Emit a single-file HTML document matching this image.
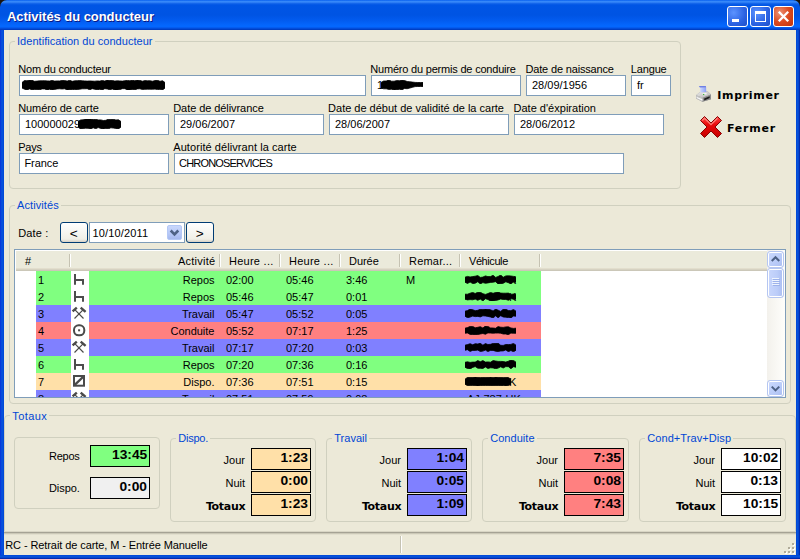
<!DOCTYPE html>
<html lang="fr"><head><meta charset="utf-8"><title>Activités du conducteur</title>
<style>
html,body{margin:0;padding:0;}
body{width:800px;height:559px;overflow:hidden;background:#ece9d8;position:relative;font-family:"Liberation Sans",sans-serif;font-size:11px;color:#000;}
.a{position:absolute;white-space:nowrap;}
.t{position:absolute;white-space:nowrap;line-height:13px;height:13px;font-size:11px;}
.in{position:absolute;box-sizing:border-box;height:21px;border:1px solid #7f9db9;background:#fff;line-height:19.600px;padding-left:5px;font-size:11px;white-space:nowrap;}
.gb{position:absolute;box-sizing:border-box;border:1px solid #d0d0bf;border-radius:4px;}
.gl{position:absolute;white-space:nowrap;color:#0046d5;background:#ece9d8;line-height:13px;height:13px;font-size:11px;}
.vb{position:absolute;box-sizing:border-box;width:60px;height:22px;border:1px solid #000;text-align:right;padding-right:1.500px;font-weight:bold;font-size:13px;line-height:17px;}
.vb span{display:inline-block;transform:scaleX(1.06);transform-origin:100% 50%;}
.bl{position:absolute;white-space:nowrap;font-family:"DejaVu Sans","Liberation Sans",sans-serif;font-weight:bold;font-size:11px;line-height:13px;}
.scr{position:absolute;background:#000;border-radius:4px;}
.btn{position:absolute;box-sizing:border-box;border:1px solid #003c74;border-radius:3px;background:linear-gradient(#fff,#f0efe6 85%,#d6d0c5);text-align:center;}
.row{position:absolute;left:36px;width:505px;height:17px;}
.c{position:absolute;top:1px;line-height:17px;height:17px;white-space:nowrap;font-size:11px;}
.hd{position:absolute;top:252px;height:19px;line-height:19px;white-space:nowrap;font-size:11px;}
.sep{position:absolute;top:254px;width:1px;height:13px;background:#c5c2b2;border-right:1px solid #fff;}
</style></head><body>

<div class="a" style="left:0;top:0;width:800px;height:10px;background:#1a1410"></div>
<div class="a" style="left:0;top:0;width:800px;height:30px;border-radius:7px 7px 0 0;background:linear-gradient(#0058ee 0%,#2a7ef6 3%,#3c8dfb 6%,#2878f2 9%,#0a5de8 13%,#0055e5 18%,#0054e3 50%,#025bef 68%,#0465fb 82%,#0468ff 88%,#0458ea 93%,#0042cc 97%,#0038b8 100%);"></div>
<div class="a" style="left:7px;top:9px;font-weight:bold;font-size:13px;line-height:16px;color:#fff;text-shadow:1px 1px 0 #0a1883;letter-spacing:-0.050px">Activités du conducteur</div>

<div class="a" style="left:0;top:30px;width:4px;height:529px;background:linear-gradient(90deg,#0831d9,#0855dd 50%,#0046d6);"></div>
<div class="a" style="left:796px;top:30px;width:4px;height:529px;background:linear-gradient(90deg,#0046d6,#0855dd 50%,#001ea0);"></div>
<div class="a" style="left:0;top:555px;width:800px;height:4px;background:linear-gradient(#0046d6,#0855dd 50%,#001ea0);"></div>
<div class="a" style="left:727px;top:6px;width:21px;height:21px;box-sizing:border-box;border:1px solid #fff;border-radius:3px;background:radial-gradient(circle at 30% 30%,#5c93ff,#2b62e2 60%,#1f4fc8);"><div class="a" style="left:4px;top:12px;width:7px;height:3px;background:#fff"></div></div>
<div class="a" style="left:750px;top:6px;width:21px;height:21px;box-sizing:border-box;border:1px solid #fff;border-radius:3px;background:radial-gradient(circle at 30% 30%,#5c93ff,#2b62e2 60%,#1f4fc8);"><div class="a" style="left:4px;top:4px;width:11px;height:11px;box-sizing:border-box;border:1px solid #fff;border-top-width:3px"></div></div>
<div class="a" style="left:773px;top:6px;width:21px;height:21px;box-sizing:border-box;border:1px solid #fff;border-radius:3px;background:radial-gradient(circle at 30% 30%,#ec9276,#dc4a20 50%,#c0330c);"><svg class="a" style="left:0;top:0" width="19" height="19" viewBox="0 0 19 19"><path d="M4.800 4.800l9.400 9.400M14.200 4.800l-9.400 9.400" stroke="#fff" stroke-width="2.300" fill="none"/></svg></div>
<div class="gb" style="left:9px;top:41px;width:672px;height:148px"></div>
<div class="gl" style="left:15.0px;top:35px;padding:0 2px;letter-spacing:0.036px">Identification du conducteur</div>
<div class="t" style="left:18.25px;top:63px;letter-spacing:-0.203px;">Nom du conducteur</div>
<div class="in" style="left:19px;top:75px;width:347px"></div>
<div class="t" style="left:370.3px;top:63px;letter-spacing:-0.199px;">Numéro du permis de conduire</div>
<div class="in" style="left:371px;top:75px;width:150px">1</div>
<div class="t" style="left:525.5px;top:63px;letter-spacing:-0.167px;">Date de naissance</div>
<div class="in" style="left:526px;top:75px;width:100px">28/09/1956</div>
<div class="t" style="left:630.7px;top:63px;letter-spacing:-0.131px;">Langue</div>
<div class="in" style="left:631px;top:75px;width:40px">fr</div>
<div class="t" style="left:18.25px;top:102px;letter-spacing:-0.102px;">Numéro de carte</div>
<div class="in" style="left:19px;top:114px;width:150px">100000029</div>
<div class="t" style="left:173.25px;top:102px;letter-spacing:-0.072px;">Date de délivrance</div>
<div class="in" style="left:174px;top:114px;width:150px">29/06/2007</div>
<div class="t" style="left:328.1px;top:102px;letter-spacing:-0.007px;">Date de début de validité de la carte</div>
<div class="in" style="left:329px;top:114px;width:180px">28/06/2007</div>
<div class="t" style="left:513.5px;top:102px;letter-spacing:0.015px;">Date d'éxpiration</div>
<div class="in" style="left:514px;top:114px;width:150px">28/06/2012</div>
<div class="t" style="left:18.25px;top:141px;letter-spacing:-0.235px;">Pays</div>
<div class="in" style="left:19px;top:153px;width:150px;padding-left:4.5px;letter-spacing:-0.097px">France</div>
<div class="t" style="left:173.25px;top:141px;letter-spacing:0.07px;">Autorité délivrant la carte</div>
<div class="in" style="left:174px;top:153px;width:450px;padding-left:4.0px;letter-spacing:-0.813px">CHRONOSERVICES</div>
<svg class="a" style="left:22px;top:80px" width="143" height="10" viewBox="0 0 143 10"><path d="M0.0 2.5 L2.5 0.5 L5.0 0.8 L7.5 0.0 L10.0 0.3 L12.5 1.3 L15.1 1.1 L17.6 0.8 L20.1 0.8 L22.6 0.7 L25.1 0.9 L27.6 1.0 L30.1 0.4 L32.6 1.1 L35.1 0.9 L37.6 0.9 L40.1 0.5 L42.6 0.6 L45.2 1.1 L47.7 0.2 L50.2 1.3 L52.7 0.8 L55.2 0.7 L57.7 0.5 L60.2 0.8 L62.7 0.9 L65.2 1.1 L67.7 0.9 L70.2 1.1 L72.8 1.2 L75.3 0.9 L77.8 1.1 L80.3 0.4 L82.8 1.1 L85.3 0.1 L87.8 0.5 L90.3 0.4 L92.8 1.1 L95.3 0.8 L97.8 0.9 L100.4 1.1 L102.9 0.7 L105.4 0.4 L107.9 0.8 L110.4 0.3 L112.9 0.8 L115.4 0.1 L117.9 0.4 L120.4 1.2 L122.9 0.6 L125.4 0.8 L127.9 0.7 L130.5 1.2 L133.0 0.6 L135.5 0.3 L138.0 1.3 L140.5 0.7 L143.0 2.5 L143.0 8.0 L140.5 10.0 L138.0 9.3 L135.5 9.6 L133.0 9.1 L130.5 9.3 L127.9 9.2 L125.4 9.2 L122.9 9.3 L120.4 9.5 L117.9 8.8 L115.4 8.9 L112.9 9.8 L110.4 9.5 L107.9 10.0 L105.4 9.9 L102.9 8.7 L100.4 8.7 L97.8 9.6 L95.3 9.9 L92.8 9.9 L90.3 9.0 L87.8 9.8 L85.3 9.0 L82.8 8.7 L80.3 9.9 L77.8 9.3 L75.3 9.7 L72.8 9.3 L70.2 8.7 L67.7 9.8 L65.2 8.7 L62.7 8.8 L60.2 8.8 L57.7 9.2 L55.2 9.5 L52.7 9.6 L50.2 9.4 L47.7 9.7 L45.2 9.9 L42.6 8.8 L40.1 9.0 L37.6 8.8 L35.1 8.9 L32.6 9.4 L30.1 10.0 L27.6 9.2 L25.1 9.9 L22.6 9.0 L20.1 8.9 L17.6 9.8 L15.1 9.4 L12.5 9.4 L10.0 9.7 L7.5 8.9 L5.0 9.9 L2.5 9.2 L0.0 8.0Z" fill="#000" stroke="#000" stroke-width="0.8" stroke-linejoin="round"/></svg>
<svg class="a" style="left:381px;top:80px" width="42" height="10" viewBox="0 0 42 10"><path d="M0.0 2.5 L2.6 1.0 L5.2 1.0 L7.9 0.0 L10.5 1.2 L13.1 1.2 L15.8 0.6 L18.4 0.7 L21.0 0.0 L23.6 0.6 L26.2 1.5 L28.9 1.8 L31.5 2.1 L34.1 2.4 L36.8 2.5 L39.4 2.5 L42.0 2.5 L42.0 6.5 L39.4 6.5 L36.8 6.5 L34.1 6.6 L31.5 7.3 L28.9 8.0 L26.2 8.7 L23.6 8.5 L21.0 9.7 L18.4 9.3 L15.8 9.7 L13.1 9.9 L10.5 9.2 L7.9 9.4 L5.2 8.8 L2.6 8.8 L0.0 8.0Z" fill="#000" stroke="#000" stroke-width="0.8" stroke-linejoin="round"/></svg>
<svg class="a" style="left:78px;top:119px" width="43" height="10" viewBox="0 0 43 10"><path d="M0.0 2.5 L2.5 1.0 L5.1 0.8 L7.6 0.1 L10.1 0.1 L12.6 0.1 L15.2 0.6 L17.7 0.2 L20.2 0.9 L22.8 0.9 L25.3 1.5 L27.8 1.3 L30.4 0.2 L32.9 0.5 L35.4 0.3 L37.9 1.0 L40.5 0.8 L43.0 2.5 L43.0 8.0 L40.5 9.9 L37.9 9.4 L35.4 9.1 L32.9 8.8 L30.4 9.8 L27.8 9.6 L25.3 9.9 L22.8 9.4 L20.2 8.6 L17.7 9.7 L15.2 8.8 L12.6 9.9 L10.1 9.3 L7.6 9.2 L5.1 9.5 L2.5 9.9 L0.0 8.0Z" fill="#000" stroke="#000" stroke-width="0.8" stroke-linejoin="round"/></svg>
<svg class="a" style="left:690px;top:82px" width="26" height="24" viewBox="0 0 26 24">
<defs><linearGradient id="pp" x1="0" y1="0" x2="1" y2="0"><stop offset="0" stop-color="#cfdaff"/><stop offset="1" stop-color="#8a9ef6"/></linearGradient>
<linearGradient id="pt" x1="0" y1="0" x2="1" y2="1"><stop offset="0" stop-color="#ececec"/><stop offset="1" stop-color="#b4b4b4"/></linearGradient></defs>
<path d="M6 13.300L10 10 17.600 9.200 21 12.400V17.200L12.400 19.700 6 16.500z" fill="#9a9a9a"/>
<path d="M6 13.300L10 10 17.600 9.200 21 12.400 12.900 15.700z" fill="url(#pt)"/>
<path d="M6 13.300L12.900 15.700 12.400 19.700 6 16.500z" fill="#c4c4c4"/>
<path d="M12.900 15.700L21 12.400V17.200L12.400 19.700z" fill="#8c8c8c"/>
<path d="M6.800 14.900L12.500 17.300V18.700L6.800 16.100z" fill="#fbfbfb"/>
<path d="M14.200 16.400L19.700 14.300V16L14.200 18.500z" fill="#1c1c1c"/>
<path d="M10.100 5.300H16.100L16.300 10.100 10.300 10.400z" fill="url(#pp)"/>
<path d="M8.800 3.900H15.900L16.100 5.500H9.900z" fill="#6f80e6"/>
<path d="M12.400 11H16.300L17 12.300 12.900 12.700z" fill="#f4f4f4"/>
<rect x="13" y="11.900" width="1.300" height="1.100" fill="#3cb83c"/>
</svg>
<div class="bl" style="left:717.25px;top:89px;letter-spacing:0.676px">Imprimer</div>
<svg class="a" style="left:699px;top:115px" width="24" height="24" viewBox="0 0 24 24">
<defs><linearGradient id="rx" x1="0" y1="0" x2="0" y2="1"><stop offset="0" stop-color="#ff4646"/><stop offset="0.400" stop-color="#e80a0a"/><stop offset="1" stop-color="#c60000"/></linearGradient></defs>
<path d="M1.500 5.500L5.500 1.500 12 8 18.500 1.500 22.500 5.500 16 12 22.500 18.500 18.500 22.500 12 16 5.500 22.500 1.500 18.500 8 12z" fill="url(#rx)" stroke="#860404" stroke-width="1" stroke-linejoin="round"/>
<path d="M3.200 5.500L5.500 3.200 12 9.700 18.500 3.200" fill="none" stroke="#ff8f85" stroke-width="1.300" opacity="0.850"/>
</svg>
<div class="bl" style="left:727.0px;top:122px;letter-spacing:0.77px">Fermer</div>
<div class="gb" style="left:9px;top:205px;width:782px;height:199px"></div>
<div class="gl" style="left:15.0px;top:199px;padding:0 2px;letter-spacing:0.099px">Activités</div>
<div class="t" style="left:18.25px;top:227px;letter-spacing:0.13px;">Date :</div>
<div class="btn" style="left:60px;top:222px;width:28px;height:21px;line-height:21px;font-size:13px"><span style="display:inline-block;transform:scaleX(1.05)">&lt;</span></div>
<div class="in" style="left:89px;top:222px;width:96px;padding-left:2.6px;letter-spacing:0.146px;line-height:20.500px">10/10/2011</div>
<div class="a" style="left:167px;top:225px;width:15px;height:15px;box-sizing:border-box;border:1px solid #b4c8f6;border-radius:2px;background:linear-gradient(#c9d7fc,#b6c8f7 60%,#a5b8ee);"><svg class="a" style="left:0;top:0" width="13" height="13" viewBox="0 0 13 13"><path d="M2.700 4.500l3.800 3.800 3.800-3.800" fill="none" stroke="#4d6185" stroke-width="2.600"/></svg></div>
<div class="btn" style="left:186px;top:222px;width:28px;height:21px;line-height:21px;font-size:13px"><span style="display:inline-block;transform:scaleX(1.05)">&gt;</span></div>
<div class="a" style="left:14px;top:249px;width:772px;height:149px;box-sizing:border-box;border:1px solid #7f9db9;background:#fff"></div>
<div class="a" style="left:16px;top:251px;width:751px;height:20px;background:linear-gradient(#ebeadb 0,#ebeadb 17px,#e2decd 17px,#e2decd 18px,#d6d2c2 18px,#d6d2c2 19px,#cbc7b8 19px,#cbc7b8 20px)"></div>
<div class="hd" style="left:25px">#</div>
<div class="hd" style="left:178.0px;letter-spacing:0.228px">Activité</div>
<div class="hd" style="left:229.0px;letter-spacing:0.258px">Heure ...</div>
<div class="hd" style="left:289.0px;letter-spacing:0.258px">Heure ...</div>
<div class="hd" style="left:349.0px;letter-spacing:-0.052px">Durée</div>
<div class="hd" style="left:409.0px;letter-spacing:0.205px">Remar...</div>
<div class="hd" style="left:469.0px;letter-spacing:-0.421px">Véhicule</div>
<div class="sep" style="left:69px"></div>
<div class="sep" style="left:219px"></div>
<div class="sep" style="left:279px"></div>
<div class="sep" style="left:339px"></div>
<div class="sep" style="left:399px"></div>
<div class="sep" style="left:459px"></div>
<div class="sep" style="left:539px"></div>
<div class="a" style="left:0;top:271px;width:767px;height:126px;overflow:hidden">
<div class="row" style="top:0px;background:#80ff80"><div class="c" style="left:2px">1</div><div class="a" style="left:35px;top:0;width:18px;height:17px;background:#fff"><svg width="18" height="17" viewBox="0 0 18 17"><path d="M4 3v10.800M3 9h10M12 8v5.800" fill="none" stroke="#4d4d4d" stroke-width="2"/></svg></div><div class="c" style="left:60px;width:118.500px;text-align:right">Repos</div><div class="c" style="left:190px">02:00</div><div class="c" style="left:250px">05:46</div><div class="c" style="left:310px">3:46</div><div class="c" style="left:370px">M</div><svg class="a" style="left:429px;top:4px" width="51" height="9" viewBox="0 0 51 9"><path d="M0.0 2.2 L2.5 1.4 L5.1 2.0 L7.7 1.6 L10.2 1.2 L12.8 0.6 L15.3 2.4 L17.9 2.1 L20.4 0.9 L22.9 1.6 L25.5 1.6 L28.1 0.3 L30.6 2.4 L33.1 1.5 L35.7 0.0 L38.2 2.3 L40.8 0.9 L43.4 0.8 L45.9 1.0 L48.5 1.4 L51.0 2.2 L51.0 7.2 L48.5 7.0 L45.9 8.8 L43.4 7.7 L40.8 6.8 L38.2 8.3 L35.7 8.7 L33.1 8.9 L30.6 6.7 L28.1 7.2 L25.5 7.4 L22.9 7.9 L20.4 8.3 L17.9 7.6 L15.3 8.9 L12.8 6.7 L10.2 8.2 L7.7 8.6 L5.1 7.0 L2.5 8.5 L0.0 7.2Z" fill="#000" stroke="#000" stroke-width="0.8" stroke-linejoin="round"/></svg><div class="c" style="left:473px">K</div></div>
<div class="row" style="top:17px;background:#80ff80"><div class="c" style="left:2px">2</div><div class="a" style="left:35px;top:0;width:18px;height:17px;background:#fff"><svg width="18" height="17" viewBox="0 0 18 17"><path d="M4 3v10.800M3 9h10M12 8v5.800" fill="none" stroke="#4d4d4d" stroke-width="2"/></svg></div><div class="c" style="left:60px;width:118.500px;text-align:right">Repos</div><div class="c" style="left:190px">05:46</div><div class="c" style="left:250px">05:47</div><div class="c" style="left:310px">0:01</div><div class="c" style="left:370px"></div><svg class="a" style="left:429px;top:4px" width="51" height="9" viewBox="0 0 51 9"><path d="M0.0 2.2 L2.5 2.2 L5.1 1.2 L7.7 0.4 L10.2 1.5 L12.8 0.2 L15.3 0.2 L17.9 1.7 L20.4 2.4 L22.9 1.6 L25.5 0.4 L28.1 1.3 L30.6 0.5 L33.1 0.1 L35.7 1.1 L38.2 1.2 L40.8 1.2 L43.4 1.1 L45.9 2.4 L48.5 2.0 L51.0 2.2 L51.0 7.2 L48.5 7.3 L45.9 6.6 L43.4 8.3 L40.8 7.4 L38.2 7.5 L35.7 7.0 L33.1 7.9 L30.6 8.4 L28.1 8.9 L25.5 9.0 L22.9 7.5 L20.4 6.7 L17.9 8.9 L15.3 7.1 L12.8 8.3 L10.2 7.1 L7.7 7.8 L5.1 7.6 L2.5 7.9 L0.0 7.2Z" fill="#000" stroke="#000" stroke-width="0.8" stroke-linejoin="round"/></svg><div class="c" style="left:473px">K</div></div>
<div class="row" style="top:34px;background:#8080ff"><div class="c" style="left:2px">3</div><div class="a" style="left:35px;top:0;width:18px;height:17px;background:#fff"><svg width="18" height="17" viewBox="0 0 18 17"><path d="M3.500 13.500L12 4.800M12.500 13.500L3.800 4.600" fill="none" stroke="#4a4a4a" stroke-width="1.200"/><path d="M1.600 6.300L5.800 2.600M9.700 2.600L14.600 6.900" fill="none" stroke="#4a4a4a" stroke-width="2.400"/></svg></div><div class="c" style="left:60px;width:118.500px;text-align:right">Travail</div><div class="c" style="left:190px">05:47</div><div class="c" style="left:250px">05:52</div><div class="c" style="left:310px">0:05</div><div class="c" style="left:370px"></div><svg class="a" style="left:429px;top:4px" width="51" height="9" viewBox="0 0 51 9"><path d="M0.0 2.2 L2.5 1.6 L5.1 0.0 L7.7 0.7 L10.2 1.7 L12.8 1.3 L15.3 0.3 L17.9 0.4 L20.4 0.1 L22.9 0.2 L25.5 0.8 L28.1 2.0 L30.6 0.1 L33.1 1.2 L35.7 2.4 L38.2 0.3 L40.8 0.3 L43.4 1.5 L45.9 1.7 L48.5 0.4 L51.0 2.2 L51.0 7.2 L48.5 7.0 L45.9 8.9 L43.4 8.6 L40.8 8.2 L38.2 8.0 L35.7 6.7 L33.1 8.8 L30.6 6.8 L28.1 9.0 L25.5 8.0 L22.9 7.4 L20.4 7.0 L17.9 6.8 L15.3 7.9 L12.8 7.4 L10.2 7.6 L7.7 7.1 L5.1 8.1 L2.5 8.7 L0.0 7.2Z" fill="#000" stroke="#000" stroke-width="0.8" stroke-linejoin="round"/></svg></div>
<div class="row" style="top:51px;background:#ff8080"><div class="c" style="left:2px">4</div><div class="a" style="left:35px;top:0;width:18px;height:17px;background:#fff"><svg width="18" height="17" viewBox="0 0 18 17"><rect x="3" y="3.300" width="10.300" height="10" rx="4.600" ry="4.600" fill="none" stroke="#4a4a4a" stroke-width="2"/><rect x="7.100" y="7.300" width="2" height="2" fill="#4a4a4a"/></svg></div><div class="c" style="left:60px;width:118.500px;text-align:right">Conduite</div><div class="c" style="left:190px">05:52</div><div class="c" style="left:250px">07:17</div><div class="c" style="left:310px">1:25</div><div class="c" style="left:370px"></div><svg class="a" style="left:429px;top:4px" width="51" height="9" viewBox="0 0 51 9"><path d="M0.0 2.2 L2.5 1.6 L5.1 0.4 L7.7 0.4 L10.2 1.8 L12.8 1.3 L15.3 0.7 L17.9 2.0 L20.4 0.0 L22.9 0.4 L25.5 1.9 L28.1 2.0 L30.6 2.3 L33.1 0.6 L35.7 1.2 L38.2 1.4 L40.8 0.9 L43.4 0.8 L45.9 2.0 L48.5 2.4 L51.0 2.2 L51.0 7.2 L48.5 7.3 L45.9 7.1 L43.4 8.7 L40.8 8.0 L38.2 8.0 L35.7 7.2 L33.1 7.0 L30.6 7.1 L28.1 7.2 L25.5 7.1 L22.9 6.9 L20.4 8.3 L17.9 7.5 L15.3 8.0 L12.8 8.5 L10.2 8.7 L7.7 8.5 L5.1 8.4 L2.5 7.0 L0.0 7.2Z" fill="#000" stroke="#000" stroke-width="0.8" stroke-linejoin="round"/></svg></div>
<div class="row" style="top:68px;background:#8080ff"><div class="c" style="left:2px">5</div><div class="a" style="left:35px;top:0;width:18px;height:17px;background:#fff"><svg width="18" height="17" viewBox="0 0 18 17"><path d="M3.500 13.500L12 4.800M12.500 13.500L3.800 4.600" fill="none" stroke="#4a4a4a" stroke-width="1.200"/><path d="M1.600 6.300L5.800 2.600M9.700 2.600L14.600 6.900" fill="none" stroke="#4a4a4a" stroke-width="2.400"/></svg></div><div class="c" style="left:60px;width:118.500px;text-align:right">Travail</div><div class="c" style="left:190px">07:17</div><div class="c" style="left:250px">07:20</div><div class="c" style="left:310px">0:03</div><div class="c" style="left:370px"></div><svg class="a" style="left:429px;top:4px" width="51" height="9" viewBox="0 0 51 9"><path d="M0.0 2.2 L2.5 1.6 L5.1 0.7 L7.7 1.8 L10.2 0.7 L12.8 1.0 L15.3 0.3 L17.9 2.2 L20.4 0.6 L22.9 1.5 L25.5 1.3 L28.1 0.4 L30.6 0.3 L33.1 0.2 L35.7 2.3 L38.2 2.4 L40.8 1.5 L43.4 1.6 L45.9 1.4 L48.5 0.4 L51.0 2.2 L51.0 7.2 L48.5 8.8 L45.9 7.5 L43.4 8.7 L40.8 6.9 L38.2 7.9 L35.7 8.0 L33.1 8.5 L30.6 8.2 L28.1 7.4 L25.5 7.4 L22.9 8.6 L20.4 7.1 L17.9 8.1 L15.3 8.5 L12.8 7.1 L10.2 7.4 L7.7 7.4 L5.1 8.4 L2.5 6.7 L0.0 7.2Z" fill="#000" stroke="#000" stroke-width="0.8" stroke-linejoin="round"/></svg></div>
<div class="row" style="top:85px;background:#80ff80"><div class="c" style="left:2px">6</div><div class="a" style="left:35px;top:0;width:18px;height:17px;background:#fff"><svg width="18" height="17" viewBox="0 0 18 17"><path d="M4 3v10.800M3 9h10M12 8v5.800" fill="none" stroke="#4d4d4d" stroke-width="2"/></svg></div><div class="c" style="left:60px;width:118.500px;text-align:right">Repos</div><div class="c" style="left:190px">07:20</div><div class="c" style="left:250px">07:36</div><div class="c" style="left:310px">0:16</div><div class="c" style="left:370px"></div><svg class="a" style="left:429px;top:4px" width="51" height="9" viewBox="0 0 51 9"><path d="M0.0 2.3 L2.5 1.8 L5.1 2.4 L7.7 2.1 L10.2 2.1 L12.8 0.6 L15.3 1.7 L17.9 0.6 L20.4 2.1 L22.9 1.9 L25.5 2.2 L28.1 0.6 L30.6 1.0 L33.1 1.4 L35.7 1.4 L38.2 1.5 L40.8 2.1 L43.4 1.2 L45.9 0.0 L48.5 0.4 L51.0 2.2 L51.0 7.2 L48.5 6.7 L45.9 8.7 L43.4 6.7 L40.8 6.6 L38.2 8.0 L35.7 6.8 L33.1 8.1 L30.6 8.8 L28.1 7.9 L25.5 7.8 L22.9 8.5 L20.4 6.9 L17.9 8.5 L15.3 8.3 L12.8 8.2 L10.2 6.6 L7.7 7.4 L5.1 9.0 L2.5 8.6 L0.0 7.2Z" fill="#000" stroke="#000" stroke-width="0.8" stroke-linejoin="round"/></svg></div>
<div class="row" style="top:102px;background:#ffe0a8"><div class="c" style="left:2px">7</div><div class="a" style="left:35px;top:0;width:18px;height:17px;background:#fff"><svg width="18" height="17" viewBox="0 0 18 17"><rect x="3" y="3" width="10" height="9.700" fill="none" stroke="#4a4a4a" stroke-width="2"/><path d="M3.500 12.200L12.500 3.500" stroke="#4a4a4a" stroke-width="2.400"/></svg></div><div class="c" style="left:60px;width:118.500px;text-align:right">Dispo.</div><div class="c" style="left:190px">07:36</div><div class="c" style="left:250px">07:51</div><div class="c" style="left:310px">0:15</div><div class="c" style="left:370px"></div><svg class="a" style="left:429px;top:4px" width="46" height="9" viewBox="0 0 46 9"><path d="M0.0 2.2 L2.6 0.3 L5.1 0.2 L7.7 0.2 L10.2 0.0 L12.8 0.2 L15.3 0.4 L17.9 0.5 L20.4 0.2 L23.0 0.5 L25.6 0.0 L28.1 0.4 L30.7 0.1 L33.2 0.2 L35.8 0.2 L38.3 0.4 L40.9 0.2 L43.4 0.6 L46.0 2.2 L46.0 7.2 L43.4 8.5 L40.9 9.0 L38.3 8.4 L35.8 8.7 L33.2 8.5 L30.7 8.8 L28.1 8.8 L25.6 8.7 L23.0 8.6 L20.4 8.5 L17.9 8.4 L15.3 8.8 L12.8 8.9 L10.2 8.8 L7.7 8.6 L5.1 8.6 L2.6 8.7 L0.0 7.2Z" fill="#000" stroke="#000" stroke-width="0.8" stroke-linejoin="round"/></svg><div class="c" style="left:473px">K</div></div>
<div class="row" style="top:119px;background:#8080ff"><div class="c" style="left:2px">8</div><div class="a" style="left:35px;top:0;width:18px;height:17px;background:#fff"><svg width="18" height="17" viewBox="0 0 18 17"><path d="M3.500 13.500L12 4.800M12.500 13.500L3.800 4.600" fill="none" stroke="#4a4a4a" stroke-width="1.200"/><path d="M1.600 6.300L5.800 2.600M9.700 2.600L14.600 6.900" fill="none" stroke="#4a4a4a" stroke-width="2.400"/></svg></div><div class="c" style="left:60px;width:118.500px;text-align:right">Travail</div><div class="c" style="left:190px">07:51</div><div class="c" style="left:250px">07:59</div><div class="c" style="left:310px">0:08</div><div class="c" style="left:370px"></div><div class="c" style="left:431px">AJ-787-HK</div></div>
</div>
<div class="a" style="left:767px;top:250px;width:18px;height:147px;background:linear-gradient(90deg,#f3f1ec,#fefefb)"></div>
<div class="a" style="left:767px;top:251px;width:17px;height:17px;box-sizing:border-box;border:1px solid #b5c6f1;border-radius:3px;background:linear-gradient(135deg,#cbd9fd,#b9cbf8 60%,#a9bcf0);box-shadow:inset 0 0 0 1px #fff"><svg class="a" style="left:0;top:0" width="15" height="15" viewBox="0 0 16 16"><path d="M4 9.500l4-4 4 4" fill="none" stroke="#4d6185" stroke-width="2.200"/></svg></div>
<div class="a" style="left:767px;top:380px;width:17px;height:17px;box-sizing:border-box;border:1px solid #b5c6f1;border-radius:3px;background:linear-gradient(135deg,#cbd9fd,#b9cbf8 60%,#a9bcf0);box-shadow:inset 0 0 0 1px #fff"><svg class="a" style="left:0;top:0" width="15" height="15" viewBox="0 0 16 16"><path d="M4 6l4 4 4-4" fill="none" stroke="#4d6185" stroke-width="2.200"/></svg></div>
<div class="a" style="left:767px;top:268px;width:17px;height:30px;box-sizing:border-box;border:1px solid #b5c6f1;border-radius:3px;background:linear-gradient(90deg,#c9d7fc,#bccdf9 60%,#aabdf0);box-shadow:inset 0 0 0 1px #fff"><div class="a" style="left:4px;top:9px;width:7px;height:1px;background:#eef4fe;box-shadow:0 2px #eef4fe,0 4px #eef4fe,0 6px #eef4fe,1px 1px #9db2ea,1px 3px #9db2ea,1px 5px #9db2ea,1px 7px #9db2ea"></div></div>
<div class="gb" style="left:4px;top:415px;width:792px;height:130px;border-radius:4px 4px 0 0"></div>
<div class="gl" style="left:10.3px;top:410px;padding:0 2px;letter-spacing:0.408px">Totaux</div>
<div class="gb" style="left:14px;top:437px;width:146px;height:72px"></div>
<div class="t" style="left:49.0px;top:450px;letter-spacing:-0.262px;">Repos</div>
<div class="vb" style="left:90px;top:445px;background:#80ff80"><span>13:45</span></div>
<div class="t" style="left:49.0px;top:482px;letter-spacing:-0.086px;">Dispo.</div>
<div class="vb" style="left:90px;top:477px;background:#f0f0f0"><span>0:00</span></div>
<div class="gb" style="left:170px;top:438px;width:146px;height:84px"></div>
<div class="gl" style="left:176.25px;top:432px;padding:0 2px;letter-spacing:-0.236px">Dispo.</div>
<div class="t" style="left:165px;top:454px;width:80px;text-align:right">Jour</div>
<div class="vb" style="left:251px;top:448px;background:#ffe0a8"><span>1:23</span></div>
<div class="t" style="left:165px;top:477px;width:80px;text-align:right">Nuit</div>
<div class="vb" style="left:251px;top:471px;background:#ffe0a8"><span>0:00</span></div>
<div class="bl" style="left:165px;top:500px;width:80.300px;text-align:right;letter-spacing:-0.300px">Totaux</div>
<div class="vb" style="left:251px;top:494px;background:#ffe0a8"><span>1:23</span></div>
<div class="gb" style="left:326px;top:438px;width:146px;height:84px"></div>
<div class="gl" style="left:332.25px;top:432px;padding:0 2px;letter-spacing:0.025px">Travail</div>
<div class="t" style="left:321px;top:454px;width:80px;text-align:right">Jour</div>
<div class="vb" style="left:407px;top:448px;background:#8080ff"><span>1:04</span></div>
<div class="t" style="left:321px;top:477px;width:80px;text-align:right">Nuit</div>
<div class="vb" style="left:407px;top:471px;background:#8080ff"><span>0:05</span></div>
<div class="bl" style="left:321px;top:500px;width:80.300px;text-align:right;letter-spacing:-0.300px">Totaux</div>
<div class="vb" style="left:407px;top:494px;background:#8080ff"><span>1:09</span></div>
<div class="gb" style="left:482px;top:438px;width:147px;height:84px"></div>
<div class="gl" style="left:488.25px;top:432px;padding:0 2px;letter-spacing:0.031px">Conduite</div>
<div class="t" style="left:478px;top:454px;width:80px;text-align:right">Jour</div>
<div class="vb" style="left:564px;top:448px;background:#ff8080"><span>7:35</span></div>
<div class="t" style="left:478px;top:477px;width:80px;text-align:right">Nuit</div>
<div class="vb" style="left:564px;top:471px;background:#ff8080"><span>0:08</span></div>
<div class="bl" style="left:478px;top:500px;width:80.300px;text-align:right;letter-spacing:-0.300px">Totaux</div>
<div class="vb" style="left:564px;top:494px;background:#ff8080"><span>7:43</span></div>
<div class="gb" style="left:639px;top:438px;width:147px;height:84px"></div>
<div class="gl" style="left:645.25px;top:432px;padding:0 2px;letter-spacing:0.078px">Cond+Trav+Disp</div>
<div class="t" style="left:635px;top:454px;width:80px;text-align:right">Jour</div>
<div class="vb" style="left:721px;top:448px;background:#fff"><span>10:02</span></div>
<div class="t" style="left:635px;top:477px;width:80px;text-align:right">Nuit</div>
<div class="vb" style="left:721px;top:471px;background:#fff"><span>0:13</span></div>
<div class="bl" style="left:635px;top:500px;width:80.300px;text-align:right;letter-spacing:-0.300px">Totaux</div>
<div class="vb" style="left:721px;top:494px;background:#fff"><span>10:15</span></div>
<div class="a" style="left:4px;top:532px;width:792px;height:23px;background:#ece9d8"></div>
<div class="a" style="left:4px;top:531px;width:792px;height:4px;background:linear-gradient(#d9d6c5 0,#d9d6c5 1px,#a5a294 1px,#a5a294 2px,#cbc8b7 2px,#cbc8b7 3px,#e2dfce 3px,#e2dfce 4px)"></div>
<div class="a" style="left:400px;top:536px;width:1px;height:17px;background:#c5c2b2;border-right:1px solid #fff"></div>
<div class="t" style="left:5.2px;top:539px;letter-spacing:-0.085px;">RC - Retrait de carte, M - Entrée Manuelle</div>
<svg class="a" style="left:782.700px;top:542.300px" width="13" height="13" viewBox="0 0 13 13"><g fill="#fff"><rect x="10" y="2" width="2" height="2"/><rect x="6" y="6" width="2" height="2"/><rect x="10" y="6" width="2" height="2"/><rect x="2" y="10" width="2" height="2"/><rect x="6" y="10" width="2" height="2"/><rect x="10" y="10" width="2" height="2"/></g><g fill="#b0ab99"><rect x="9" y="1" width="2" height="2"/><rect x="5" y="5" width="2" height="2"/><rect x="9" y="5" width="2" height="2"/><rect x="1" y="9" width="2" height="2"/><rect x="5" y="9" width="2" height="2"/><rect x="9" y="9" width="2" height="2"/></g></svg>
</body></html>
